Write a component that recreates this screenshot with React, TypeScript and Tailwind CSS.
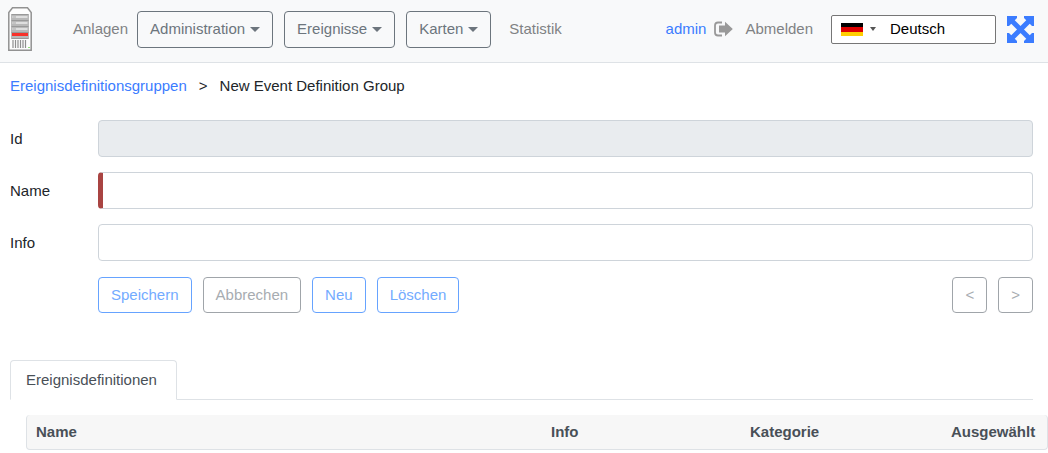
import { useState } from "react";
import type { ReactNode } from "react";

function ServerLogo() {
  return (
    <svg width="24" height="44" viewBox="0 0 24 44" aria-hidden="true">
      <path d="M4.500 .8H19.500L23.200 5.500V43.200H.8V5.500Z" fill="#fdfdfd" stroke="#929292" strokeWidth="1.500" />
      <rect x="3" y="7" width="18" height="25" rx="1" fill="#b8b8b8" />
      <path d="M3.500 7.500H20.500M3.500 13.500H20.500M3.500 19.500H20.500M3.500 25.500H20.500M3.500 31.500H20.500" stroke="#999" />
      <path d="M4.500 10H19.500M4.500 16H19.500M4.500 22H19.500" stroke="#dedede" strokeWidth="2" />
      <path d="M5 10H8M5 16H8M5 22H8" stroke="#aaa" />
      <rect x="4" y="26" width="16" height="3" fill="#f8322a" />
      <path d="M5 33V41M7.500 33V41M10 33V41M12.500 33V41M15 33V41M17.500 33V41" stroke="#8f8f8f" strokeWidth="1.200" />
      <rect x="20" y="40" width="2" height="1" fill="#8fe07a" />
    </svg>
  );
}

function LogoutIcon() {
  return (
    <svg width="19" height="16" viewBox="0 0 19 16" aria-hidden="true">
      <path d="M8 1.500H4Q1 1.500 1 4.500V11.500Q1 14.500 4 14.500H8" fill="none" stroke="#999" strokeWidth="1.800" />
      <path d="M5 4.500H11V.8L18.800 8L11 15.200V11.500H5Z" fill="#999" />
    </svg>
  );
}

function ExpandIcon() {
  return (
    <svg width="27" height="27" viewBox="0 0 27 27" fill="#3b7cff" aria-hidden="true">
      <path d="M4 4L23 23M23 4L4 23" stroke="#3b7cff" strokeWidth="5" />
      <path d="M0 0H10V2L2 10H0ZM27 0V10H25L17 2V0ZM0 27V17H2L10 25V27ZM27 27H17V25L25 17H27Z" />
    </svg>
  );
}

function GermanFlag() {
  return (
    <svg width="22" height="13" viewBox="0 0 22 13" aria-hidden="true">
      <rect width="22" height="13" fill="#ffce00" />
      <rect width="22" height="9" fill="#d00" />
      <rect width="22" height="4" fill="#000" />
    </svg>
  );
}

function NavDropdown({ children }: { children: ReactNode }) {
  return (
    <button
      type="button"
      aria-haspopup="menu"
      className="flex h-[37px] items-center gap-[5px] rounded border border-[#6c757d] px-3 text-[#6c757d]"
    >
      {children}
      <span className="border-x-[5px] border-t-[5px] border-x-transparent border-t-[#6c757d]" />
    </button>
  );
}

function ActionButton({ primary = false, children }: { primary?: boolean; children: ReactNode }) {
  return (
    <button
      type="button"
      disabled
      className={
        primary
          ? "h-9 rounded border border-[#66a3ff] px-3 text-[#73abff]"
          : "h-9 rounded border border-[#a0a5aa] px-3 text-[#a7acb1]"
      }
    >
      {children}
    </button>
  );
}

const inputClass = "h-[37px] w-full min-w-0 rounded border border-[#ced4da] px-3 outline-none";

export default function App() {
  const [language, setLanguage] = useState("Deutsch");
  const [name, setName] = useState("");
  const [info, setInfo] = useState("");

  return (
    <div className="overflow-x-hidden bg-white font-['Liberation_Sans',Arial,sans-serif] text-[15px] leading-[22px] text-[#212529]">
      <header className="flex h-[63px] items-center border-b border-[#dee2e6] bg-[#f8f9fa] pr-3.5 pb-1 pl-2 text-[#808284]">
        <a href="#" aria-label="Start" className="mr-[41px]">
          <ServerLogo />
        </a>
        <nav className="flex items-center">
          <a href="#anlagen" className="mr-[9px]">Anlagen</a>
          <div className="flex gap-[11px]">
            <NavDropdown>Administration</NavDropdown>
            <NavDropdown>Ereignisse</NavDropdown>
            <NavDropdown>Karten</NavDropdown>
          </div>
          <a href="#statistik" className="ml-[18px]">Statistik</a>
        </nav>
        <div className="ml-auto flex items-center">
          <a href="#admin" className="mr-2 text-[#3b7cff]">admin</a>
          <a href="#logout" className="mr-[18px] flex items-center gap-3">
            <LogoutIcon />
            Abmelden
          </a>
          <div className="mr-[11px] flex h-[29px] w-[165px] items-center rounded-xs border border-[#767676] bg-white pl-[9px]">
            <button type="button" aria-label="Sprache auswählen" className="flex items-center gap-[7px]">
              <GermanFlag />
              <span className="border-x-[3px] border-t-4 border-x-transparent border-t-[#555]" />
            </button>
            <input
              aria-label="Sprache"
              value={language}
              onChange={(e) => setLanguage(e.target.value)}
              className="ml-[14px] w-full min-w-0 text-black outline-none"
            />
          </div>
          <button type="button" aria-label="Vollbild">
            <ExpandIcon />
          </button>
        </div>
      </header>

      <main className="pr-[15px] pl-2.5">
        <nav className="flex gap-3 pt-3">
          <a href="#gruppen" className="text-[#3b7cff]">Ereignisdefinitionsgruppen</a>
          <span>&gt;</span>
          <span>New Event Definition Group</span>
        </nav>

        <form className="mt-[23px] grid grid-cols-[88px_minmax(0,1fr)] items-center gap-y-[15px]">
          <label htmlFor="group-id">Id</label>
          <input id="group-id" readOnly className={`${inputClass} bg-[#e9ecef]`} />
          <label htmlFor="group-name">Name</label>
          <input
            id="group-name"
            required
            value={name}
            onChange={(e) => setName(e.target.value)}
            className="h-[37px] w-full min-w-0 rounded border border-l-[5px] border-[#ced4da] border-l-[#a94442] px-3 outline-none"
          />
          <label htmlFor="group-info">Info</label>
          <input id="group-info" value={info} onChange={(e) => setInfo(e.target.value)} className={inputClass} />
          <div className="col-start-2 flex flex-wrap gap-[11px] pt-px">
            <ActionButton primary>Speichern</ActionButton>
            <ActionButton>Abbrechen</ActionButton>
            <ActionButton primary>Neu</ActionButton>
            <ActionButton primary>Löschen</ActionButton>
            <div className="ml-auto flex gap-[11px]">
              <ActionButton>&lt;</ActionButton>
              <ActionButton>&gt;</ActionButton>
            </div>
          </div>
        </form>

        <div role="tablist" className="mt-[47px] flex border-b border-[#dee2e6]">
          <button
            type="button"
            role="tab"
            aria-selected="true"
            className="-mb-px h-10 min-w-[167px] rounded-t border border-[#dee2e6] border-b-white bg-white px-[15px] text-left text-[#495057]"
          >
            Ereignisdefinitionen
          </button>
        </div>

        <div role="tabpanel" className="-mr-[15px] pt-[15px] pl-4">
          <div className="overflow-hidden rounded border border-t-0 border-[#dee2e6] bg-[#f7f7f7]">
            <table className="w-full table-fixed text-left text-[#495057]">
              <thead>
                <tr className="h-[34px]">
                  <th className="pl-[9px]">Name</th>
                  <th className="w-[199px] pl-[9px]">Info</th>
                  <th className="w-[201px] pl-[9px]">Kategorie</th>
                  <th className="w-[105px] pl-[9px]">Ausgewählt</th>
                </tr>
              </thead>
            </table>
          </div>
        </div>
      </main>
    </div>
  );
}
